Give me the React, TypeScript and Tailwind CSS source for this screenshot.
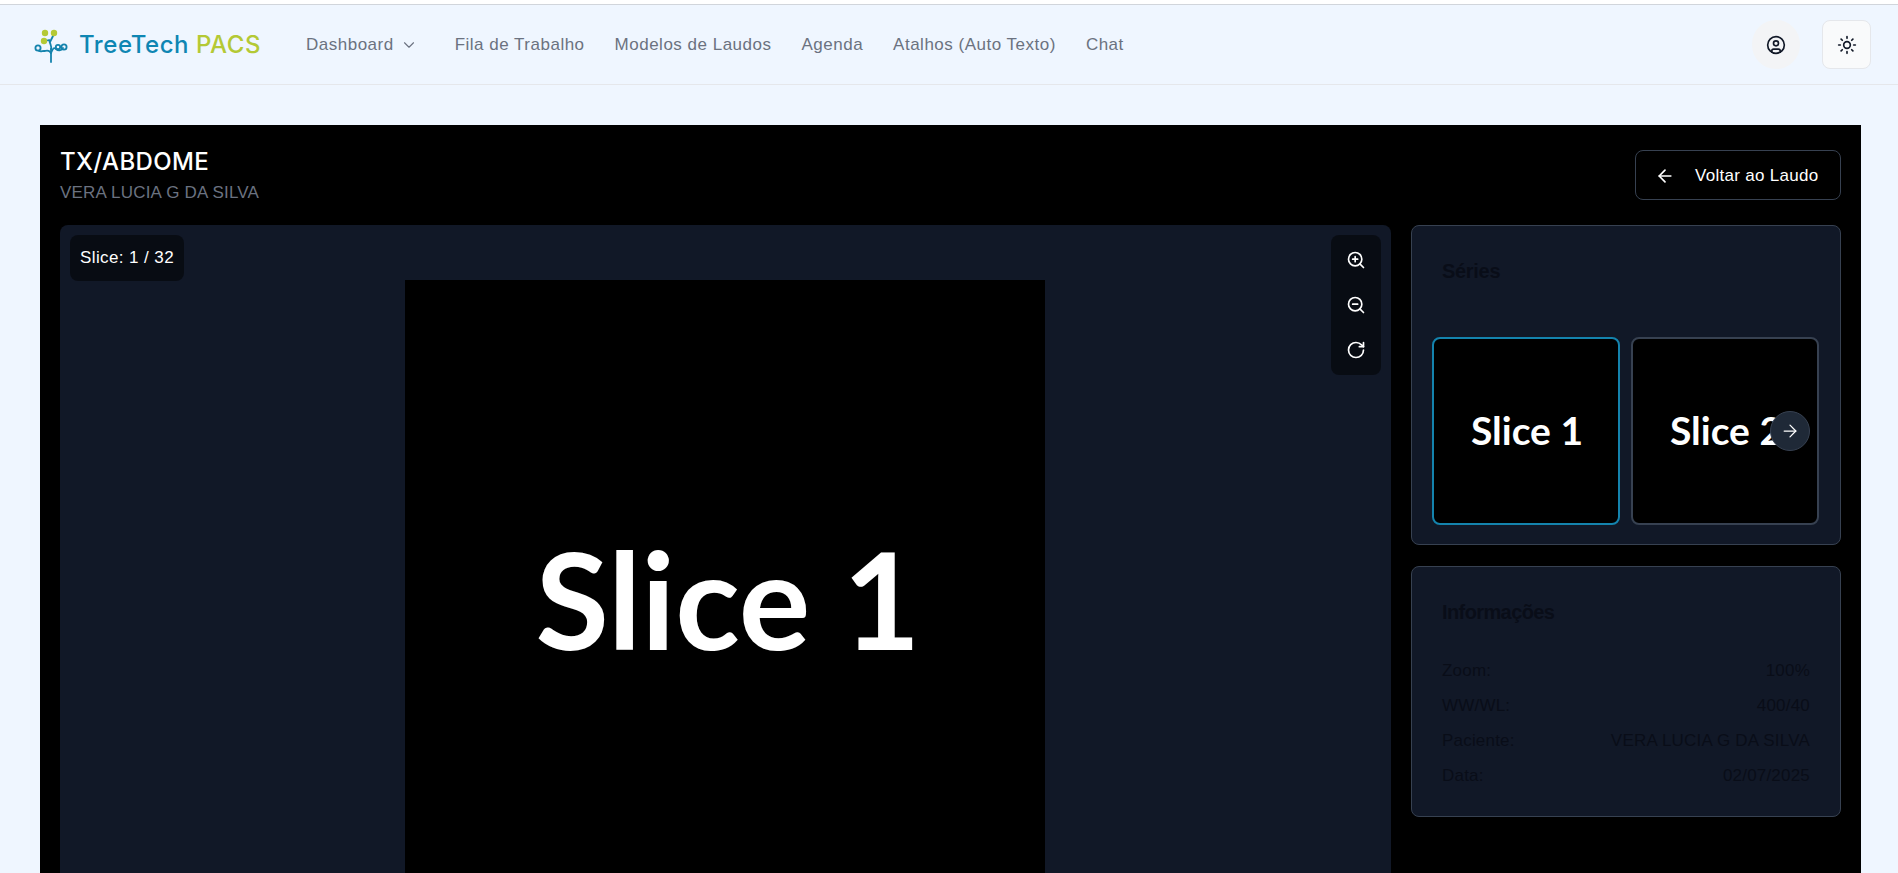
import { ArrowLeft, ArrowRight, ChevronDown, RotateCw, Sun, CircleUser, ZoomIn, ZoomOut } from 'lucide-react'

const navItems = ['Fila de Trabalho', 'Modelos de Laudos', 'Agenda', 'Atalhos (Auto Texto)', 'Chat']

const infoRows = [
  ['Zoom:', '100%'],
  ['WW/WL:', '400/40'],
  ['Paciente:', 'VERA LUCIA G DA SILVA'],
  ['Data:', '02/07/2025'],
]

function Logo() {
  return (
    <svg width="36" height="36" viewBox="0 0 36 36" fill="none" className="shrink-0">
      <g stroke="#1483ad" strokeWidth="1.8" strokeLinecap="round">
        <path d="M19 35V22" />
        <path d="M19 26c-2-4-5-2-7-2-2 0-3 1-5 0" />
        <path d="M19 26c2-5 3-6 5-4 2 2 5 2 7-1" />
        <path d="M19 22c1-2-1-6-2-9M18 15l3-6M17 13l-4 1" />
        <circle cx="6" cy="21" r="2.600" />
        <circle cx="26" cy="20" r="2.200" />
        <circle cx="32" cy="20" r="2.600" />
      </g>
      <circle cx="13" cy="6" r="3.200" fill="#b4c935" />
      <circle cx="22" cy="6" r="3.200" fill="#b4c935" />
      <circle cx="12" cy="14" r="3.200" fill="#b4c935" />
    </svg>
  )
}

function SliceImage({ label, className }: { label: string; className: string }) {
  return (
    <div className={`flex items-center justify-center bg-black font-['Lato',sans-serif] font-bold text-white ${className}`}>
      {label}
    </div>
  )
}

export default function App() {
  return (
    <div className="h-screen overflow-hidden bg-[#eff6ff] font-['Liberation_Sans',Arial,sans-serif]">
      <div className="h-[5px] border-b border-[#d1d5db] bg-white" />

      {/* Header */}
      <header className="flex h-[80px] items-center justify-between border-b border-[#e5e7eb] pl-[32px] pr-[27px]">
        <div className="flex items-center">
          <Logo />
          <span className="ml-[11px] font-['Inter',sans-serif] text-[24px] font-medium tracking-[0.55px] text-[#0e86b3]">
            TreeTech <span className="text-[#b4c935]">PACS</span>
          </span>
          <nav className="ml-[45px] flex items-center gap-[30px] text-[17px] tracking-[0.5px] text-[#6b7280]">
            <span className="mr-[7px] flex items-center gap-[6px]">
              Dashboard
              <ChevronDown size={18} strokeWidth={1.5} />
            </span>
            {navItems.map((item) => (
              <span key={item}>{item}</span>
            ))}
          </nav>
        </div>
        <div className="flex items-center gap-[22px]">
          <button className="flex h-[49px] w-[48px] items-center justify-center rounded-full bg-[#f3f4f6] text-[#111827]">
            <CircleUser size={20} />
          </button>
          <button className="flex h-[49px] w-[49px] items-center justify-center rounded-lg border border-[#e5e7eb] bg-[#f9fafb] text-[#111827]">
            <Sun size={20} />
          </button>
        </div>
      </header>

      {/* Viewer */}
      <main className="pl-10 pr-[37px] pt-10">
        <div className="bg-black p-5">
          <div className="mb-5 flex items-center justify-between">
            <div>
              <h1 className="pt-[2px] font-['Inter',sans-serif] text-[24px] font-medium leading-[30px] tracking-[0.4px] text-white">TX/ABDOME</h1>
              <p className="mt-1 text-[17px] leading-[24px] tracking-[0.2px] text-[#6b7280]">VERA LUCIA G DA SILVA</p>
            </div>
            <button className="flex h-[50px] w-[206px] items-center gap-5 rounded-lg border border-[#374151] pl-[19px] pt-[1px] text-[17px] tracking-[0.3px] text-white">
              <ArrowLeft size={20} />
              Voltar ao Laudo
            </button>
          </div>

          <div className="flex gap-5">
            {/* Main slice */}
            <div className="relative flex h-[760px] flex-1 justify-center rounded-lg bg-[#111827] pr-[1px] pt-[55px]">
              <div className="absolute left-[10px] top-[10px] rounded-lg bg-black/50 px-[10px] py-[12px] text-[17px] leading-[22px] tracking-[0.4px] text-white">
                Slice: 1 / 32
              </div>
              <div className="absolute right-[10px] top-[10px] flex h-[140px] w-[50px] flex-col items-center justify-around rounded-lg bg-black/50 py-[2px] text-white">
                <ZoomIn size={20} />
                <ZoomOut size={20} />
                <RotateCw size={20} />
              </div>
              <SliceImage label="Slice 1" className="h-[640px] w-[640px] pb-[3px] pl-[6px] text-[134px]" />
            </div>

            {/* Sidebar */}
            <div className="flex w-[430px] flex-col gap-[21px]">
              <section className="relative h-[320px] rounded-lg border border-[#374151] bg-[#111827] px-5 pt-[111px]">
                <h2 className="absolute left-[30px] top-[31px] text-[20px] font-bold leading-[28px] tracking-[-0.3px] text-[#090d18]">Séries</h2>
                <div className="flex gap-[11px]">
                  <SliceImage label="Slice 1" className="h-[188px] w-[188px] rounded-lg border-2 border-[#1483ad] pb-[2px] pl-[2px] text-[39px]" />
                  <SliceImage label="Slice 2" className="h-[188px] w-[188px] rounded-lg border-2 border-[#374151] pb-[2px] pl-[2px] text-[39px]" />
                </div>
                <button className="absolute right-[30px] top-[185px] flex h-10 w-10 items-center justify-center rounded-full border border-[#374151] bg-[#1f2937] text-white">
                  <ArrowRight size={20} strokeWidth={1.5} />
                </button>
              </section>

              <section className="h-[251px] rounded-lg border border-[#374151] bg-[#111827] px-[30px] pt-[31px] text-[#090d18]">
                <h2 className="mb-[33px] text-[20px] font-bold leading-[28px] tracking-[-0.6px]">Informações</h2>
                <div className="flex flex-col gap-[11px] text-[17px] leading-[24px] tracking-[0.2px]">
                  {infoRows.map(([label, value]) => (
                    <div key={label} className="flex justify-between">
                      <span>{label}</span>
                      <span>{value}</span>
                    </div>
                  ))}
                </div>
              </section>
            </div>
          </div>
        </div>
      </main>
    </div>
  )
}
